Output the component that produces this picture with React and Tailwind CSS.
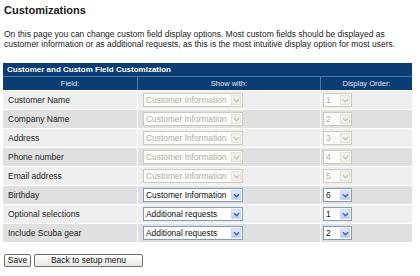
import React from "react";

function Chevron({ color }) {
  return (
    <svg width="7" height="5" viewBox="0 0 7 5" className="block">
      <path d="M1 1.2 L3.5 3.7 L6 1.2" fill="none" stroke={color} strokeWidth="1.4" />
    </svg>
  );
}

function Select({ value, disabled, wide }) {
  const widthCls = wide ? "w-[100px]" : "w-[29px]";
  if (disabled) {
    return (
      <div className={`${widthCls} h-[14px] flex items-stretch border border-[#cdcbc0] bg-[#fbfbf9]`}>
        <div className="flex-1 flex items-center pl-[2px] overflow-hidden whitespace-nowrap text-[8.4px] leading-none text-[#b3b1a6]">
          {value}
        </div>
        <div className="w-[10px] m-px flex items-center justify-center bg-[#f1f0ea] border border-[#e4e2d8]">
          <Chevron color="#c9c7bb" />
        </div>
      </div>
    );
  }
  return (
    <div className={`${widthCls} h-[14px] flex items-stretch border border-[#7f9db9] bg-white`}>
      <div className="flex-1 flex items-center pl-[2px] overflow-hidden whitespace-nowrap text-[8.4px] leading-none text-[#111]">
        {value}
      </div>
      <div className="w-[10px] m-px flex items-center justify-center bg-gradient-to-b from-[#dfe8fe] to-[#b9ccf8] border border-[#c8d6fb]">
        <Chevron color="#4d6185" />
      </div>
    </div>
  );
}

const rows = [
  { field: "Customer Name", show: "Customer Information", order: "1", disabled: true },
  { field: "Company Name", show: "Customer Information", order: "2", disabled: true },
  { field: "Address", show: "Customer Information", order: "3", disabled: true },
  { field: "Phone number", show: "Customer Information", order: "4", disabled: true },
  { field: "Email address", show: "Customer Information", order: "5", disabled: true },
  { field: "Birthday", show: "Customer Information", order: "6", disabled: false },
  { field: "Optional selections", show: "Additional requests", order: "1", disabled: false },
  { field: "Include Scuba gear", show: "Additional requests", order: "2", disabled: false },
];

export default function App() {
  return (
    <div className="w-[420px] h-[276px] overflow-hidden bg-white pl-[3px] font-['Liberation_Sans',Arial,sans-serif] text-[#222]">
      <h1 className="pt-[4px] pl-[1px] text-[11px] leading-[13px] font-bold text-[#1a1a1a]">
        Customizations
      </h1>
      <p className="mt-[13px] pl-[1px] text-[8.5px] leading-[9.5px] whitespace-nowrap text-[#222]">
        On this page you can change custom field display options. Most custom fields should be displayed as
        <br />
        customer information or as additional requests, as this is the most intuitive display option for most users.
      </p>

      <div className="mt-[14px] w-[409px] flex flex-col">
        <div className="flex flex-col gap-px bg-[#4f74a6]">
          <div className="h-[13px] bg-[#0b3d75] flex items-center pl-[4px] text-[8px] font-bold leading-none text-white">
            Customer and Custom Field Customization
          </div>
          <div className="grid grid-cols-[134px_182px_91px] gap-x-px">
            <div className="h-[13px] bg-[#0b3d75] flex items-center justify-center text-[7.5px] leading-none text-[#dfe7f2]">
              Field:
            </div>
            <div className="h-[13px] bg-[#0b3d75] flex items-center justify-center text-[7.5px] leading-none text-[#dfe7f2]">
              Show with:
            </div>
            <div className="h-[13px] bg-[#0b3d75] flex items-center justify-center text-[7.5px] leading-none text-[#dfe7f2]">
              Display Order:
            </div>
          </div>
        </div>

        <div className="mt-px flex flex-col gap-px bg-white">
          {rows.map((r, i) => {
            const bg = i % 2 === 0 ? "bg-[#efefef]" : "bg-[#e0e0e0]";
            return (
              <div key={r.field} className="grid grid-cols-[134px_182px_91px] gap-x-px">
                <div className={`${bg} h-[18px] flex items-center pl-[5px] text-[8.5px] leading-none text-[#222]`}>
                  {r.field}
                </div>
                <div className={`${bg} h-[18px] flex items-center pl-[5px]`}>
                  <Select value={r.show} disabled={r.disabled} wide />
                </div>
                <div className={`${bg} h-[18px] flex items-center pl-[2px]`}>
                  <Select value={r.order} disabled={r.disabled} />
                </div>
              </div>
            );
          })}
        </div>
      </div>

      <div className="mt-[12px] pl-[1px] flex gap-[3px]">
        <button className="w-[27px] h-[13px] flex items-center justify-center rounded-[2px] border border-[#6e6e6e] bg-gradient-to-b from-white to-[#e8e8e2] text-[8.5px] leading-none text-[#111]">
          Save
        </button>
        <button className="w-[109px] h-[13px] flex items-center justify-center rounded-[2px] border border-[#6e6e6e] bg-gradient-to-b from-white to-[#e8e8e2] text-[8.5px] leading-none text-[#111]">
          Back to setup menu
        </button>
      </div>
    </div>
  );
}
